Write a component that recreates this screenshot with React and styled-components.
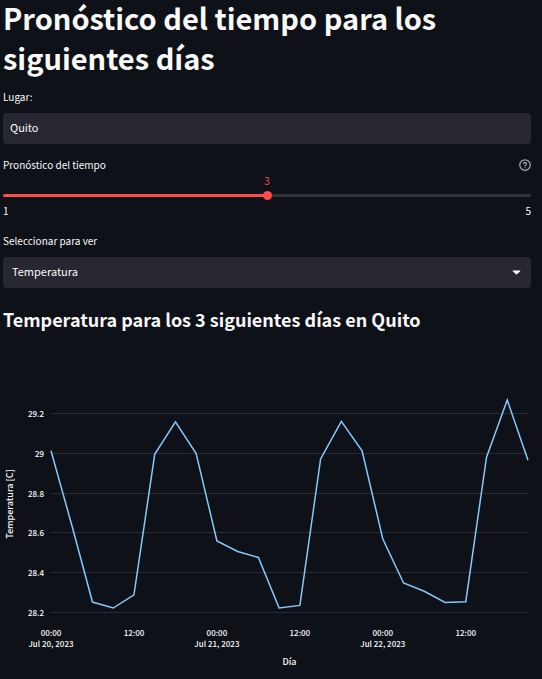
import React, { useEffect, useRef, useState } from "react";
import styled, { createGlobalStyle } from "styled-components";

const GlobalStyle = createGlobalStyle`
  * { box-sizing: border-box; }
  body {
    margin: 0;
    background: #0e1117;
    color: #fafafa;
    font-family: "Noto Sans CJK JP", "Noto Sans", sans-serif;
  }
`;

const Page = styled.main`
  display: flex;
  flex-direction: column;
  padding: 0 11px 0 3px;
`;

const Title = styled.h1`
  margin: -3px 0 0;
  font-size: 29px;
  line-height: 40px;
  font-weight: 700;
`;

const Subtitle = styled.h3`
  margin: 16px 0 0;
  font-size: 18px;
  line-height: 30px;
  font-weight: 700;
`;

const Field = styled.div`
  display: flex;
  flex-direction: column;
  margin-top: ${(p) => p.$gap}px;
`;

const LabelRow = styled.div`
  display: flex;
  align-items: center;
  justify-content: space-between;
  height: 20px;
`;

const Label = styled.label`
  font-size: 10px;
  line-height: 20px;
`;

const TextInput = styled.input`
  width: 100%;
  height: 31px;
  margin-top: 6px;
  padding: 0 7px 3px;
  border: 0;
  border-radius: 4px;
  background: #262730;
  color: #fafafa;
  font: inherit;
  font-size: 11px;
`;

const SelectBox = styled.div`
  display: grid;
  align-items: center;
  margin-top: 6px;

  > * { grid-area: 1 / 1; }
  > svg { justify-self: end; margin-right: 10px; pointer-events: none; }
`;

const Select = styled.select`
  appearance: none;
  width: 100%;
  height: 31px;
  padding: 0 32px 3px 9px;
  border: 0;
  border-radius: 4px;
  background: #262730;
  color: #fafafa;
  font: inherit;
  font-size: 11px;
`;

const HelpButton = styled.button`
  display: flex;
  padding: 0;
  border: 0;
  background: none;
  color: #a3a6ab;
`;

const SliderArea = styled.div`
  position: relative;
  padding-top: 16px;
`;

const SliderValue = styled.output`
  position: absolute;
  top: 0;
  transform: translateX(-50%);
  color: #ff4b4b;
  font-size: 10px;
  line-height: 12px;
`;

const Range = styled.input`
  appearance: none;
  display: block;
  width: 100%;
  height: 9px;
  margin: 0;
  background: none;

  &::-webkit-slider-runnable-track {
    height: 3px;
    border-radius: 2px;
    background: linear-gradient(
      to right,
      #ff4b4b ${(p) => p.$percent}%,
      #31333b ${(p) => p.$percent}%
    );
  }
  &::-webkit-slider-thumb {
    appearance: none;
    width: 9px;
    height: 9px;
    margin-top: -3px;
    border-radius: 50%;
    background: #ff4b4b;
  }
`;

const Limits = styled.div`
  display: flex;
  justify-content: space-between;
  margin-top: 3px;
  font-size: 10px;
  line-height: 16px;
`;

const ChartBox = styled.figure`
  height: 345px;
  margin: 0;
  overflow: hidden;

  svg { display: block; }
`;

const AxisText = styled.text`
  fill: #fafafa;
  font-size: ${(p) => p.$size || 8}px;
  font-weight: 500;
  text-anchor: ${(p) => p.$anchor || "middle"};
`;

const TEMPERATURES = [
  29.01, 28.637, 28.25, 28.22, 28.286, 28.992, 29.155, 28.996, 28.557, 28.504,
  28.474, 28.22, 28.233, 28.969, 29.158, 29.01, 28.567, 28.346, 28.304, 28.248,
  28.252, 28.978, 29.265, 28.962,
];
const Y_TICKS = [29.2, 29, 28.8, 28.6, 28.4, 28.2];
const X_TICKS = [
  { index: 0, time: "00:00", date: "Jul 20, 2023" },
  { index: 4, time: "12:00" },
  { index: 8, time: "00:00", date: "Jul 21, 2023" },
  { index: 12, time: "12:00" },
  { index: 16, time: "00:00", date: "Jul 22, 2023" },
  { index: 20, time: "12:00" },
];

function HelpIcon() {
  return (
    <svg width="12" height="12" viewBox="0 0 24 24" fill="none" stroke="currentColor" strokeWidth="2.5" strokeLinecap="round" strokeLinejoin="round">
      <circle cx="12" cy="12" r="10.5" />
      <path d="M9 9a3 3 0 0 1 5.900 1c0 2-3 2.600-3 4" />
      <path d="M12 17.500h.01" />
    </svg>
  );
}

function TemperatureChart() {
  const box = useRef(null);
  const [width, setWidth] = useState(528);

  useEffect(() => {
    const observer = new ResizeObserver(([entry]) => setWidth(entry.contentRect.width));
    observer.observe(box.current);
    return () => observer.disconnect();
  }, []);

  const left = 48;
  const right = width - 3;
  const x = (i) => left + ((right - left) * i) / (TEMPERATURES.length - 1);
  const y = (t) => 79 + (29.2 - t) * 199;
  const line = TEMPERATURES.map((t, i) => `${x(i)},${y(t)}`).join(" ");

  return (
    <ChartBox ref={box}>
      <svg width={width} height="345" role="img" aria-label="Temperatura por día">
        {Y_TICKS.map((t) => (
          <g key={t}>
            <line x1={left} x2={right} y1={Math.round(y(t)) + 0.5} y2={Math.round(y(t)) + 0.5} stroke="#282b31" />
            <AxisText $anchor="end" x={left - 7} y={y(t) + 4}>{t}</AxisText>
          </g>
        ))}
        <polyline points={line} fill="none" stroke="#83c9ff" strokeWidth="1.5" strokeLinejoin="miter" />
        {X_TICKS.map(({ index, time, date }) => (
          <g key={index}>
            <AxisText x={x(index)} y="302">{time}</AxisText>
            {date && <AxisText x={x(index)} y="313">{date}</AxisText>}
          </g>
        ))}
        <AxisText $size={9} x={(left + right) / 2} y="331">Día</AxisText>
        <AxisText $size={9} transform="translate(10 170) rotate(-90)">Temperatura [C]</AxisText>
      </svg>
    </ChartBox>
  );
}

export default function App() {
  const [place, setPlace] = useState("Quito");
  const [days, setDays] = useState(3);
  const percent = ((days - 1) / 4) * 100;

  return (
    <>
      <GlobalStyle />
      <Page>
        <Title>Pronóstico del tiempo para los siguientes días</Title>
        <Field $gap={10}>
          <LabelRow><Label htmlFor="place">Lugar:</Label></LabelRow>
          <TextInput id="place" value={place} onChange={(e) => setPlace(e.target.value)} />
        </Field>
        <Field $gap={11}>
          <LabelRow>
            <Label htmlFor="days">Pronóstico del tiempo</Label>
            <HelpButton type="button" aria-label="Ayuda"><HelpIcon /></HelpButton>
          </LabelRow>
          <SliderArea>
            <SliderValue htmlFor="days" style={{ left: `${percent}%` }}>{days}</SliderValue>
            <Range id="days" type="range" min="1" max="5" value={days} $percent={percent} onChange={(e) => setDays(Number(e.target.value))} />
          </SliderArea>
          <Limits><span>1</span><span>5</span></Limits>
        </Field>
        <Field $gap={12}>
          <LabelRow><Label htmlFor="series">Seleccionar para ver</Label></LabelRow>
          <SelectBox>
            <Select id="series" defaultValue="Temperatura">
              <option>Temperatura</option>
            </Select>
            <svg width="9" height="5" viewBox="0 0 9 5"><path d="M1 .5h7q.8.400 0 1.100L5 4.300q-.5.500-1 0L1 1.600Q.2.900 1 .5Z" fill="#fafafa" /></svg>
          </SelectBox>
        </Field>
        <Subtitle>{`Temperatura para los ${days} siguientes días en ${place}`}</Subtitle>
        <TemperatureChart />
      </Page>
    </>
  );
}
